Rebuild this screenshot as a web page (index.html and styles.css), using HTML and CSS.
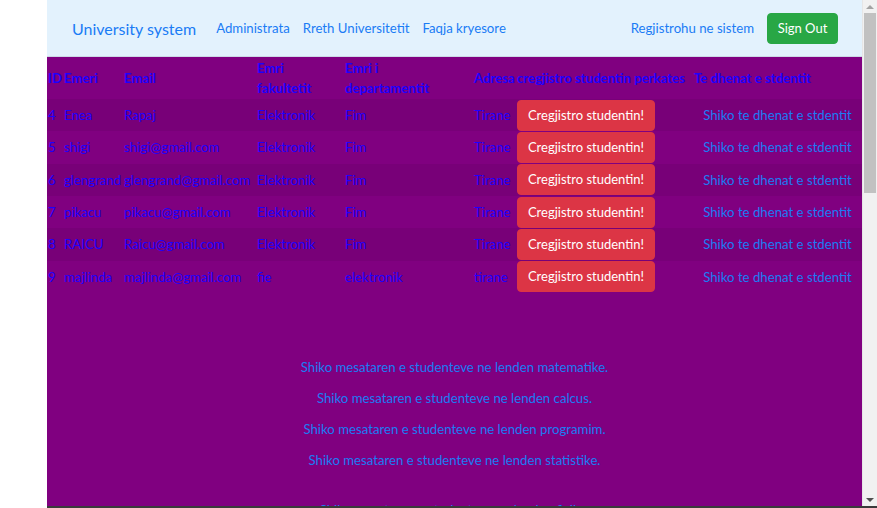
FILE: index.html
```html
<!DOCTYPE html>
<html lang="sq">
<head>
<meta charset="utf-8">
<title>University system</title>
<link rel="stylesheet" href="styles.css">
</head>
<body>
<div class="page">
  <div class="gutter"></div>
  <main class="main">
    <nav class="navbar">
      <a class="brand" href="#">University system</a>
      <ul class="nav">
        <li><a class="nav-link" href="#">Administrata</a></li>
        <li><a class="nav-link" href="#">Rreth Universitetit</a></li>
        <li><a class="nav-link" href="#">Faqja kryesore</a></li>
      </ul>
      <div class="nav-right">
        <a class="nav-link" href="#">Regjistrohu ne sistem</a>
        <button class="btn btn-success" type="button">Sign Out</button>
      </div>
    </nav>

    <table class="students">
      <thead>
        <tr>
          <th class="c-id">ID</th>
          <th class="c-name">Emeri</th>
          <th class="c-email">Email</th>
          <th class="c-fak">Emri<br>fakultetit</th>
          <th class="c-dep">Emri i<br>departamentit</th>
          <th class="c-adr">Adresa</th>
          <th class="c-reg">cregjistro studentin perkates</th>
          <th class="c-info">Te dhenat e stdentit</th>
        </tr>
      </thead>
      <tbody>
        <tr><td>4</td><td>Enea</td><td>Rapaj</td><td>Elektronik</td><td>Fim</td><td>Tirane</td><td><button class="btn btn-danger" type="button">Cregjistro studentin!</button></td><td class="center"><a href="#">Shiko te dhenat e stdentit</a></td></tr>
        <tr><td>5</td><td>shigi</td><td>shigi@gmail.com</td><td>Elektronik</td><td>Fim</td><td>Tirane</td><td><button class="btn btn-danger" type="button">Cregjistro studentin!</button></td><td class="center"><a href="#">Shiko te dhenat e stdentit</a></td></tr>
        <tr><td>6</td><td>glengrand</td><td>glengrand@gmail.com</td><td>Elektronik</td><td>Fim</td><td>Tirane</td><td><button class="btn btn-danger" type="button">Cregjistro studentin!</button></td><td class="center"><a href="#">Shiko te dhenat e stdentit</a></td></tr>
        <tr><td>7</td><td>pikacu</td><td>pikacu@gmail.com</td><td>Elektronik</td><td>Fim</td><td>Tirane</td><td><button class="btn btn-danger" type="button">Cregjistro studentin!</button></td><td class="center"><a href="#">Shiko te dhenat e stdentit</a></td></tr>
        <tr><td>8</td><td>RAICU</td><td>Raicu@gmail.com</td><td>Elektronik</td><td>Fim</td><td>Tirane</td><td><button class="btn btn-danger" type="button">Cregjistro studentin!</button></td><td class="center"><a href="#">Shiko te dhenat e stdentit</a></td></tr>
        <tr><td>9</td><td>majlinda</td><td>majlinda@gmail.com</td><td>fie</td><td>elektronik</td><td>tirane</td><td><button class="btn btn-danger" type="button">Cregjistro studentin!</button></td><td class="center"><a href="#">Shiko te dhenat e stdentit</a></td></tr>
      </tbody>
    </table>

    <div class="averages">
      <a href="#">Shiko mesataren e studenteve ne lenden matematike.</a>
      <a href="#">Shiko mesataren e studenteve ne lenden calcus.</a>
      <a href="#">Shiko mesataren e studenteve ne lenden programim.</a>
      <a href="#">Shiko mesataren e studenteve ne lenden statistike.</a>
      <a class="more" href="#">Shiko mesataren e studenteve ne lenden fizike.</a>
    </div>
  </main>
  <div class="scrollbar">
    <div class="arrow arrow-up"></div>
    <div class="track"><div class="thumb"></div></div>
    <div class="arrow arrow-down"></div>
  </div>
  <div class="bottombar"></div>
</div>
</body>
</html>
```

FILE: styles.css
```css
* { box-sizing: border-box; }

html, body {
  margin: 0;
  padding: 0;
  height: 100%;
  overflow: hidden;
  background: #fff;
}

body {
  font-family: Lato, "Open Sans", sans-serif;
  font-size: 13.2px;
  line-height: 20px;
}

a { color: #1a7cf5; text-decoration: none; }

.page {
  display: grid;
  grid-template-columns: 47px 1fr 15px;
  grid-template-rows: 506px 2px;
  height: 508px;
}

.gutter {
  grid-column: 1;
  grid-row: 1 / 3;
  background: #fff;
}

.main {
  grid-column: 2;
  grid-row: 1;
  background: #800080;
  overflow: hidden;
  display: flex;
  flex-direction: column;
}

/* navbar */
.navbar {
  height: 57px;
  flex: none;
  background: #e3f2fd;
  border-bottom: 1px solid #cdd9e6;
  display: flex;
  align-items: center;
  padding: 0 24px 0 25px;
}

.brand {
  font-size: 16px;
  line-height: 26px;
  margin-right: 13.5px;
  padding-top: 2px;
}

.nav {
  display: flex;
  list-style: none;
  margin: 0;
  padding: 0;
}

.nav-link {
  display: block;
  padding: 0 6.5px;
  font-size: 13.2px;
}

.nav-right {
  margin-left: auto;
  display: flex;
  align-items: center;
  gap: 6.5px;
}

.btn {
  font-family: inherit;
  font-size: 13px;
  line-height: 21px;
  color: #fff;
  border: 1px solid transparent;
  border-radius: 4px;
  padding: 4px 10px;
  height: 31px;
  cursor: pointer;
}

.btn-success { background: #28a745; border-color: #28a745; width: 71px; padding: 4px 0; }
.btn-danger  { background: #dc3545; border-color: #dc3545; width: 138px; padding: 4px 0; }

/* table */
.students {
  width: 100%;
  border-collapse: collapse;
  table-layout: fixed;
  color: #1d00ff;
}

.students th,
.students td {
  padding: 0 1px;
  text-align: left;
  vertical-align: middle;
  white-space: nowrap;
}

.students th {
  font-weight: 700;
  height: 42px;
  line-height: 20px;
}

.students td {
  height: 32.33px;
}

.students tbody tr:nth-of-type(odd) { background: rgba(0, 0, 0, 0.06); }

.students td.center { text-align: center; }

.c-id   { width: 16px; }
.c-name { width: 60px; }
.c-email{ width: 133px; }
.c-fak  { width: 88px; }
.c-dep  { width: 129px; }
.c-adr  { width: 43px; }
.c-reg  { width: 177px; }
.c-info { width: auto; }

/* averages */
.averages {
  display: flex;
  flex-direction: column;
  align-items: center;
  padding-top: 64px;
  gap: 10px;
}

.averages a {
  line-height: 21px;
}

.averages .more { margin-top: 19px; }

/* fake scrollbar */
.scrollbar {
  grid-column: 3;
  grid-row: 1;
  background: #f1f1f1;
  border-left: 1px solid #e6e6e6;
  display: flex;
  flex-direction: column;
}

.arrow {
  height: 13px;
  flex: none;
  display: flex;
  align-items: center;
  justify-content: center;
}

.arrow::before {
  content: "";
  border-left: 4px solid transparent;
  border-right: 4px solid transparent;
}

.arrow-up::before { border-bottom: 4px solid #a3a3a3; }
.arrow-down::before { border-top: 4px solid #505050; }

.track {
  flex: 1;
  padding: 0 1px;
}

.thumb {
  height: 180px;
  background: #c1c1c1;
}

.bottombar {
  grid-column: 2 / 4;
  grid-row: 2;
  background: #3a3a3a;
}
```
